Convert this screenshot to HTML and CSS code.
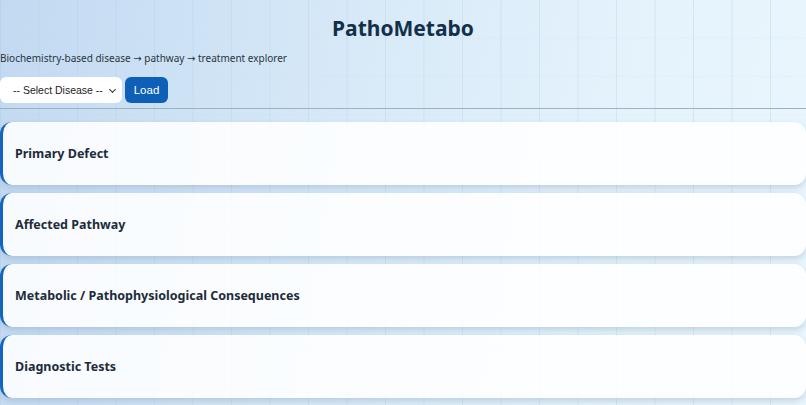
FILE: index.html
```html
<!DOCTYPE html>
<html lang="en">
<head>
  <meta charset="UTF-8" />
  <meta name="viewport" content="width=device-width, initial-scale=1.0"/>
  <title>PathoMetabo</title>
  <link rel="stylesheet" href="styles.css">
</head>
<body>
  <header class="top">
    <h1>PathoMetabo</h1>
    <p class="tagline">Biochemistry-based disease <span class="arrow">→</span> pathway <span class="arrow">→</span> treatment explorer</p>
    <div class="controls">
      <label class="select-wrap">
        <select id="disease-select">
          <option value="">-- Select Disease --</option>
        </select>
      </label>
      <button type="button" id="load-btn">Load</button>
    </div>
  </header>
  <hr class="divider">

  <main class="sections">
    <section class="card">
      <h2>Primary Defect</h2>
    </section>
    <section class="card">
      <h2>Affected Pathway</h2>
    </section>
    <section class="card">
      <h2>Metabolic / Pathophysiological Consequences</h2>
    </section>
    <section class="card">
      <h2>Diagnostic Tests</h2>
    </section>
  </main>
</body>
</html>
```

FILE: styles.css
```css
html, body {
  height: 100%;
}
body {
  margin: 0;
  font-family: 'Noto Sans', 'Open Sans', sans-serif;
  color: #1d2b3a;
  background-color: #dcebf8;
  background-image:
    linear-gradient(90deg, rgba(170, 200, 225, 0.3) 1px, transparent 1px),
    linear-gradient(0deg, rgba(190, 210, 230, 0.12) 1px, transparent 1px),
    linear-gradient(100deg, #c2d9f1 0%, #d7e9f8 40%, #e5f3fc 75%, #eaf6fd 100%);
  background-size: 38.5px 38.5px, 38.5px 38.5px, 100% 100%;
  overflow: hidden;
}
.top {
  padding-top: 14px;
}
h1 {
  margin: 0;
  text-align: center;
  font-size: 21px;
  font-weight: 700;
  color: #13304a;
  line-height: 28px;
}
.tagline {
  margin: 9px 0 0;
  font-size: 10px;
  line-height: 14px;
  color: #2a3440;
}
.arrow {
  font-family: 'DejaVu Sans', sans-serif;
  font-size: 10px;
}
.controls {
  display: flex;
  gap: 3px;
  margin-top: 11px;
}
.select-wrap {
  position: relative;
  display: block;
}
/* small chevron drawn over the native select */
.select-wrap::after {
  content: "";
  position: absolute;
  right: 7px;
  top: 10px;
  width: 4px;
  height: 4px;
  border-right: 1.3px solid #333;
  border-bottom: 1.3px solid #333;
  transform: rotate(45deg);
  pointer-events: none;
}
select, button {
  height: 26px;
  border-radius: 6px;
  font-family: 'Liberation Sans', Arial, sans-serif;
  font-size: 11.5px;
}
select {
  appearance: none;
  -webkit-appearance: none;
  display: block;
  width: 122px;
  padding: 0 0 0 13px;
  border: none;
  background: white;
  color: #222;
  font-size: 10.5px;
}
button {
  width: 43px;
  padding: 0;
  border: none;
  background-color: #0d5fb8;
  color: white;
  cursor: pointer;
}
.divider {
  margin: 5px 0 0;
  border: none;
  border-top: 1px solid #9fb0c0;
}
.sections {
  display: flex;
  flex-direction: column;
  gap: 8px;
  margin-top: 13px;
}
.card {
  height: 63px;
  display: flex;
  align-items: center;
  padding-left: 12px;
  background: rgba(255, 255, 255, 0.88);
  border-left: 3px solid #1565c0;
  border-radius: 12px;
  box-shadow: 0 3px 6px rgba(120, 150, 180, 0.35);
}
.card h2 {
  margin: 0;
  font-size: 12.5px;
  font-weight: 700;
  color: #1d2b3a;
}
```
